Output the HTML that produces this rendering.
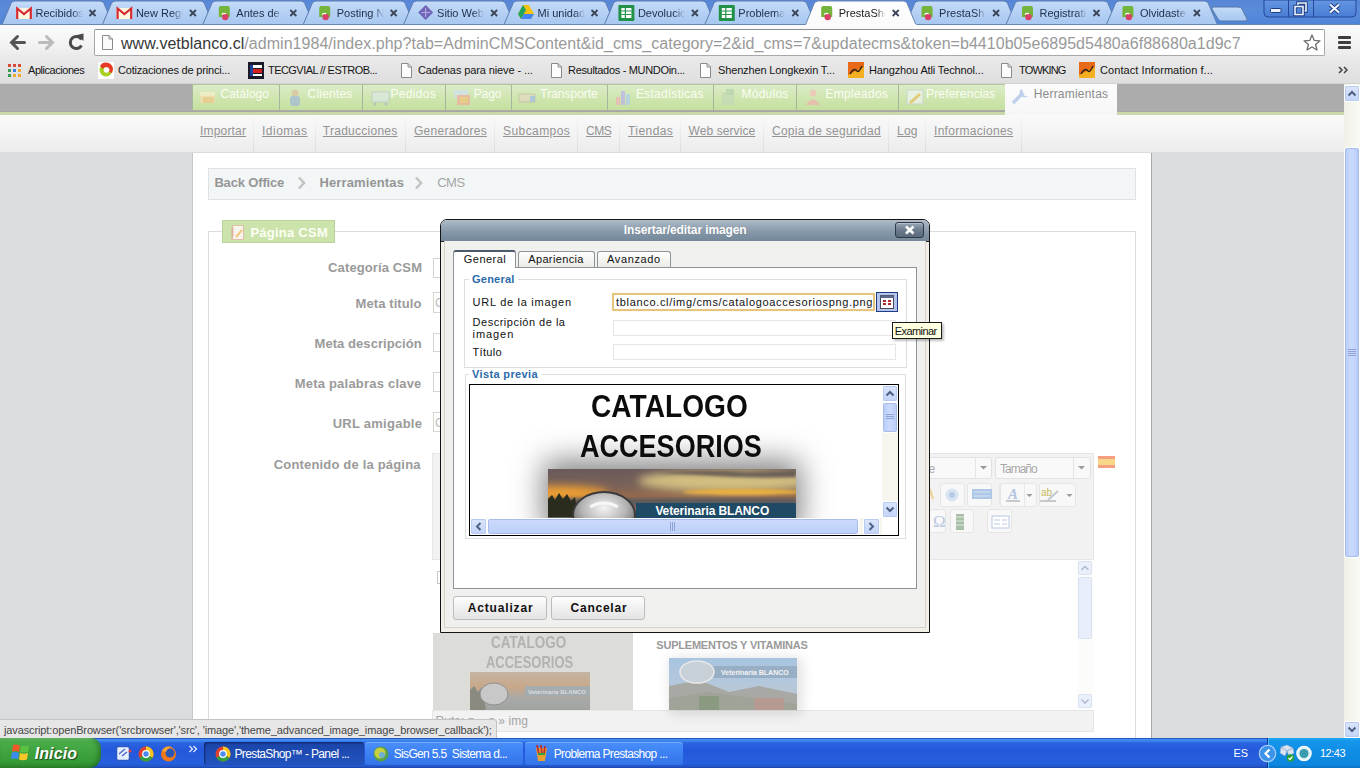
<!DOCTYPE html><html><head><meta charset="utf-8"><style>
*{margin:0;padding:0;box-sizing:border-box}
html,body{width:1360px;height:768px;overflow:hidden;background:#fff;font-family:"Liberation Sans",sans-serif}
.abs{position:absolute}
.t{position:absolute;white-space:nowrap}
</style></head><body><div class="abs" style="left:0;top:0;width:1360px;height:25px;background:linear-gradient(#5786d6,#5a8cda 40%,#4e84d8)"></div><svg class="abs" style="left:0;top:0" width="1360" height="27"><defs><linearGradient id="tg" x1="0" y1="0" x2="0" y2="1"><stop offset="0" stop-color="#c6dcf8"/><stop offset=".5" stop-color="#b4d0f4"/><stop offset="1" stop-color="#a8c8f0"/></linearGradient><linearGradient id="wc" x1="0" y1="0" x2="0" y2="1"><stop offset="0" stop-color="#6496e2"/><stop offset="1" stop-color="#4a7cd4"/></linearGradient><linearGradient id="at" x1="0" y1="0" x2="0" y2="1"><stop offset="0" stop-color="#ffffff"/><stop offset="1" stop-color="#fafafa"/></linearGradient></defs><path d="M2.0 24.5 L11.0 3.5 Q12.0 1 15.0 1 L100.0 1 Q103.0 1 104.0 3.5 L113.0 24.5 Z" fill="url(#tg)" stroke="#5c7cb0" stroke-width="1"/><path d="M102.4 24.5 L111.4 3.5 Q112.4 1 115.4 1 L200.4 1 Q203.4 1 204.4 3.5 L213.4 24.5 Z" fill="url(#tg)" stroke="#5c7cb0" stroke-width="1"/><path d="M202.8 24.5 L211.8 3.5 Q212.8 1 215.8 1 L300.8 1 Q303.8 1 304.8 3.5 L313.8 24.5 Z" fill="url(#tg)" stroke="#5c7cb0" stroke-width="1"/><path d="M303.2 24.5 L312.2 3.5 Q313.2 1 316.2 1 L401.2 1 Q404.2 1 405.2 3.5 L414.2 24.5 Z" fill="url(#tg)" stroke="#5c7cb0" stroke-width="1"/><path d="M403.6 24.5 L412.6 3.5 Q413.6 1 416.6 1 L501.6 1 Q504.6 1 505.6 3.5 L514.6 24.5 Z" fill="url(#tg)" stroke="#5c7cb0" stroke-width="1"/><path d="M504.0 24.5 L513.0 3.5 Q514.0 1 517.0 1 L602.0 1 Q605.0 1 606.0 3.5 L615.0 24.5 Z" fill="url(#tg)" stroke="#5c7cb0" stroke-width="1"/><path d="M604.4 24.5 L613.4 3.5 Q614.4 1 617.4 1 L702.4 1 Q705.4 1 706.4 3.5 L715.4 24.5 Z" fill="url(#tg)" stroke="#5c7cb0" stroke-width="1"/><path d="M704.8 24.5 L713.8 3.5 Q714.8 1 717.8 1 L802.8 1 Q805.8 1 806.8 3.5 L815.8 24.5 Z" fill="url(#tg)" stroke="#5c7cb0" stroke-width="1"/><path d="M905.6 24.5 L914.6 3.5 Q915.6 1 918.6 1 L1003.6 1 Q1006.6 1 1007.6 3.5 L1016.6 24.5 Z" fill="url(#tg)" stroke="#5c7cb0" stroke-width="1"/><path d="M1006.0 24.5 L1015.0 3.5 Q1016.0 1 1019.0 1 L1104.0 1 Q1107.0 1 1108.0 3.5 L1117.0 24.5 Z" fill="url(#tg)" stroke="#5c7cb0" stroke-width="1"/><path d="M1106.4 24.5 L1115.4 3.5 Q1116.4 1 1119.4 1 L1204.4 1 Q1207.4 1 1208.4 3.5 L1217.4 24.5 Z" fill="url(#tg)" stroke="#5c7cb0" stroke-width="1"/><line x1="0" y1="24.5" x2="1360" y2="24.5" stroke="#6a86b4"/><path d="M805.2 25.5 L814.2 3.5 Q815.2 1 818.2 1 L903.2 1 Q906.2 1 907.2 3.5 L916.2 25.5 Z" fill="url(#at)" stroke="#6a86b4" stroke-width="1"/><rect x="806.2" y="24" width="110" height="3" fill="#fbfbfb"/><path d="M1214 7 L1238 7 Q1241 7 1242 9 L1247 19 Q1248 21 1245 21 L1221 21 Q1219 21 1218 19 L1212 9 Q1211 7 1214 7 Z" fill="url(#tg)" stroke="#5a78a8"/><path d="M1264 0 L1264 13 Q1264 17 1268 17 L1352 17 Q1356 17 1356 13 L1356 0 Z" fill="url(#wc)" stroke="#24499a"/><line x1="1288.5" y1="0" x2="1288.5" y2="17" stroke="#24499a"/><line x1="1313.5" y1="0" x2="1313.5" y2="17" stroke="#24499a"/><rect x="1270.5" y="8.5" width="10.5" height="4" rx="1" fill="#eef4ff" stroke="#1c3c80"/><path d="M1298 6 V3 H1306 V11 H1303" fill="none" stroke="#1c3c80" stroke-width="3.4"/><path d="M1298 6 V3 H1306 V11 H1303" fill="none" stroke="#eef4ff" stroke-width="1.6"/><rect x="1295" y="6.5" width="8" height="8" fill="none" stroke="#1c3c80" stroke-width="3.4"/><rect x="1295" y="6.5" width="8" height="8" fill="none" stroke="#eef4ff" stroke-width="1.6"/><path d="M1330 4.5 L1339 12.5 M1339 4.5 L1330 12.5" stroke="#1c3c80" stroke-width="4"/><path d="M1330 4.5 L1339 12.5 M1339 4.5 L1330 12.5" stroke="#eef4ff" stroke-width="2.2"/><path d="M89.5 10 L95.5 16 M95.5 10 L89.5 16" stroke="#3a4658" stroke-width="1.8"/><rect x="16.0" y="8" width="16" height="11" fill="#fff6e0"/><path d="M17.2 19 L17.2 8.5 L24.0 14 L30.8 8.5 L30.8 19" fill="none" stroke="#d62a30" stroke-width="2.2"/><path d="M189.9 10 L195.9 16 M195.9 10 L189.9 16" stroke="#3a4658" stroke-width="1.8"/><rect x="116.4" y="8" width="16" height="11" fill="#fff6e0"/><path d="M117.60000000000001 19 L117.60000000000001 8.5 L124.4 14 L131.20000000000002 8.5 L131.20000000000002 19" fill="none" stroke="#d62a30" stroke-width="2.2"/><path d="M290.3 10 L296.3 16 M296.3 10 L290.3 16" stroke="#3a4658" stroke-width="1.8"/><path d="M218.8 17 L218.8 8 Q218.8 6 220.8 6 L227.8 6 Q229.8 6 229.8 8 L229.8 17 Z" fill="#74b43a"/><circle cx="225.3" cy="17" r="3.2" fill="#d8406a"/><path d="M221.8 14.5 Q223.8 12.5 225.8 14" fill="none" stroke="#fff" stroke-width="1.2"/><path d="M390.7 10 L396.7 16 M396.7 10 L390.7 16" stroke="#3a4658" stroke-width="1.8"/><path d="M319.2 17 L319.2 8 Q319.2 6 321.2 6 L328.2 6 Q330.2 6 330.2 8 L330.2 17 Z" fill="#74b43a"/><circle cx="325.7" cy="17" r="3.2" fill="#d8406a"/><path d="M322.2 14.5 Q324.2 12.5 326.2 14" fill="none" stroke="#fff" stroke-width="1.2"/><path d="M491.1 10 L497.1 16 M497.1 10 L491.1 16" stroke="#3a4658" stroke-width="1.8"/><path d="M425.6 5 L433.1 12.5 L425.6 20 L418.1 12.5 Z" fill="#7064b8"/><path d="M425.6 8 L425.6 17 M421.1 12.5 L430.1 12.5" stroke="#b0a8e0" stroke-width="1.2"/><path d="M591.5 10 L597.5 16 M597.5 10 L591.5 16" stroke="#3a4658" stroke-width="1.8"/><path d="M523.0 5 L529.0 5 L534.0 14 L531.0 19 L521.0 19 L518.0 14 Z" fill="#f4c20d"/><path d="M518.0 14 L523.0 5 L526.0 10 L521.0 19 Z" fill="#1fa463"/><path d="M521.0 19 L524.0 14 L534.0 14 L531.0 19Z" fill="#4285f4"/><path d="M691.9 10 L697.9 16 M697.9 10 L691.9 16" stroke="#3a4658" stroke-width="1.8"/><rect x="618.4" y="5" width="16" height="16" rx="1" fill="#219148"/><rect x="621.4" y="8" width="10" height="10" fill="#fff"/><path d="M621.4 11 L631.4 11 M621.4 14.5 L631.4 14.5 M625.4 8 L625.4 18" stroke="#219148" stroke-width="1.2"/><path d="M792.3 10 L798.3 16 M798.3 10 L792.3 16" stroke="#3a4658" stroke-width="1.8"/><rect x="718.8" y="5" width="16" height="16" rx="1" fill="#219148"/><rect x="721.8" y="8" width="10" height="10" fill="#fff"/><path d="M721.8 11 L731.8 11 M721.8 14.5 L731.8 14.5 M725.8 8 L725.8 18" stroke="#219148" stroke-width="1.2"/><path d="M892.7 10 L898.7 16 M898.7 10 L892.7 16" stroke="#3a4658" stroke-width="1.8"/><path d="M821.2 17 L821.2 8 Q821.2 6 823.2 6 L830.2 6 Q832.2 6 832.2 8 L832.2 17 Z" fill="#74b43a"/><circle cx="827.7" cy="17" r="3.2" fill="#d8406a"/><path d="M824.2 14.5 Q826.2 12.5 828.2 14" fill="none" stroke="#fff" stroke-width="1.2"/><path d="M993.1 10 L999.1 16 M999.1 10 L993.1 16" stroke="#3a4658" stroke-width="1.8"/><path d="M921.6 17 L921.6 8 Q921.6 6 923.6 6 L930.6 6 Q932.6 6 932.6 8 L932.6 17 Z" fill="#74b43a"/><circle cx="928.1" cy="17" r="3.2" fill="#d8406a"/><path d="M924.6 14.5 Q926.6 12.5 928.6 14" fill="none" stroke="#fff" stroke-width="1.2"/><path d="M1093.5 10 L1099.5 16 M1099.5 10 L1093.5 16" stroke="#3a4658" stroke-width="1.8"/><path d="M1022.0 17 L1022.0 8 Q1022.0 6 1024.0 6 L1031.0 6 Q1033.0 6 1033.0 8 L1033.0 17 Z" fill="#74b43a"/><circle cx="1028.5" cy="17" r="3.2" fill="#d8406a"/><path d="M1025.0 14.5 Q1027.0 12.5 1029.0 14" fill="none" stroke="#fff" stroke-width="1.2"/><path d="M1193.9 10 L1199.9 16 M1199.9 10 L1193.9 16" stroke="#3a4658" stroke-width="1.8"/><path d="M1122.4 17 L1122.4 8 Q1122.4 6 1124.4 6 L1131.4 6 Q1133.4 6 1133.4 8 L1133.4 17 Z" fill="#74b43a"/><circle cx="1128.9" cy="17" r="3.2" fill="#d8406a"/><path d="M1125.4 14.5 Q1127.4 12.5 1129.4 14" fill="none" stroke="#fff" stroke-width="1.2"/></svg><div class="t" style="left:35.50px;top:8px;font-size:11px;line-height:11px;color:#1e2e48;width:47px;overflow:hidden;-webkit-mask-image:linear-gradient(90deg,#000 78%,transparent);">Recibidos</div><div class="t" style="left:135.90px;top:8px;font-size:11px;line-height:11px;color:#1e2e48;width:47px;overflow:hidden;-webkit-mask-image:linear-gradient(90deg,#000 78%,transparent);">New Regi</div><div class="t" style="left:236.30px;top:8px;font-size:11px;line-height:11px;color:#1e2e48;width:47px;overflow:hidden;-webkit-mask-image:linear-gradient(90deg,#000 78%,transparent);">Antes de</div><div class="t" style="left:336.70px;top:8px;font-size:11px;line-height:11px;color:#1e2e48;width:47px;overflow:hidden;-webkit-mask-image:linear-gradient(90deg,#000 78%,transparent);">Posting N</div><div class="t" style="left:437.10px;top:8px;font-size:11px;line-height:11px;color:#1e2e48;width:47px;overflow:hidden;-webkit-mask-image:linear-gradient(90deg,#000 78%,transparent);">Sitio Web</div><div class="t" style="left:537.50px;top:8px;font-size:11px;line-height:11px;color:#1e2e48;width:47px;overflow:hidden;-webkit-mask-image:linear-gradient(90deg,#000 78%,transparent);">Mi unidad</div><div class="t" style="left:637.90px;top:8px;font-size:11px;line-height:11px;color:#1e2e48;width:47px;overflow:hidden;-webkit-mask-image:linear-gradient(90deg,#000 78%,transparent);">Devolucio</div><div class="t" style="left:738.30px;top:8px;font-size:11px;line-height:11px;color:#1e2e48;width:47px;overflow:hidden;-webkit-mask-image:linear-gradient(90deg,#000 78%,transparent);">Problemas</div><div class="t" style="left:838.70px;top:8px;font-size:11px;line-height:11px;color:#1a1a1a;width:47px;overflow:hidden;-webkit-mask-image:linear-gradient(90deg,#000 78%,transparent);">PrestaSho</div><div class="t" style="left:939.10px;top:8px;font-size:11px;line-height:11px;color:#1e2e48;width:47px;overflow:hidden;-webkit-mask-image:linear-gradient(90deg,#000 78%,transparent);">PrestaSh</div><div class="t" style="left:1039.50px;top:8px;font-size:11px;line-height:11px;color:#1e2e48;width:47px;overflow:hidden;-webkit-mask-image:linear-gradient(90deg,#000 78%,transparent);">Registrati</div><div class="t" style="left:1139.90px;top:8px;font-size:11px;line-height:11px;color:#1e2e48;width:47px;overflow:hidden;-webkit-mask-image:linear-gradient(90deg,#000 78%,transparent);">Olvidaste</div><div class="abs" style="left:0;top:25px;width:1360px;height:59px;background:linear-gradient(#fbfbfb,#f2f2f2 35%,#e8e8e8 60%,#dedede)"></div><div class="abs" style="left:0;top:83px;width:1360px;height:1px;background:#d2d2d2"></div><svg class="abs" style="left:0;top:25px" width="95" height="32">
<path d="M11.5 17.5 L24.5 17.5 M17.5 11.5 L11.5 17.5 L17.5 23.5" fill="none" stroke="#555" stroke-width="3" stroke-linecap="round"/>
<path d="M39.5 17.5 L52.5 17.5 M46.5 11.5 L52.5 17.5 L46.5 23.5" fill="none" stroke="#bbb" stroke-width="3" stroke-linecap="round"/>
<path d="M81.5 14.5 A6 6 0 1 0 81.5 20.5" fill="none" stroke="#4a4a4a" stroke-width="3"/><path d="M77 10 L83.5 8.5 L83.5 16 Z" fill="#4a4a4a"/>
</svg><div class="abs" style="left:94px;top:29px;width:1231px;height:27px;background:#fff;border:1px solid #a8a8a8;border-top-color:#909090;border-radius:2px"></div><svg class="abs" style="left:100px;top:34px" width="16" height="18"><path d="M2.5 1.5 L9 1.5 L12.5 5 L12.5 15.5 L2.5 15.5 Z" fill="#fafafa" stroke="#8a8a8a"/><path d="M9 1.5 L9 5 L12.5 5" fill="none" stroke="#8a8a8a"/></svg><div class="t" style="left:121.00px;top:36px;font-size:16px;line-height:16px;color:#999;letter-spacing:0.038px;-webkit-font-smoothing:antialiased;"><span style="color:#383838">www.vetblanco.cl</span>/admin1984/index.php?tab=AdminCMSContent&amp;id_cms_category=2&amp;id_cms=7&amp;updatecms&amp;token=b4410b05e6895d5480a6f88680a1d9c7</div><svg class="abs" style="left:1302px;top:33px" width="20" height="20"><path d="M10 2 L12.3 7.4 L18 7.8 L13.6 11.5 L15 17 L10 14 L5 17 L6.4 11.5 L2 7.8 L7.7 7.4 Z" fill="none" stroke="#6e6e6e" stroke-width="1.3" stroke-linejoin="round"/></svg><div class="abs" style="left:1338px;top:36px;width:13px;height:3px;background:#3e3e3e;border-radius:1px"></div><div class="abs" style="left:1338px;top:41px;width:13px;height:3px;background:#3e3e3e;border-radius:1px"></div><div class="abs" style="left:1338px;top:46px;width:13px;height:3px;background:#3e3e3e;border-radius:1px"></div><div class="t" style="left:28.00px;top:65px;font-size:11px;line-height:11px;color:#151515;letter-spacing:-0.455px;">Aplicaciones</div><div class="t" style="left:118.00px;top:65px;font-size:11px;line-height:11px;color:#151515;letter-spacing:-0.188px;">Cotizaciones de princi...</div><div class="t" style="left:268.00px;top:65px;font-size:11px;line-height:11px;color:#151515;letter-spacing:-0.550px;">TECGVIAL // ESTROB...</div><div class="t" style="left:418.00px;top:65px;font-size:11px;line-height:11px;color:#151515;letter-spacing:-0.109px;">Cadenas para nieve - ...</div><div class="t" style="left:568.00px;top:65px;font-size:11px;line-height:11px;color:#151515;letter-spacing:-0.314px;">Resultados - MUNDOin...</div><div class="t" style="left:718.00px;top:65px;font-size:11px;line-height:11px;color:#151515;letter-spacing:-0.145px;">Shenzhen Longkexin T...</div><div class="t" style="left:869.00px;top:65px;font-size:11px;line-height:11px;color:#151515;letter-spacing:-0.135px;">Hangzhou Atli Technol...</div><div class="t" style="left:1019.00px;top:65px;font-size:11px;line-height:11px;color:#151515;letter-spacing:-0.833px;">TOWKING</div><div class="t" style="left:1100.00px;top:65px;font-size:11px;line-height:11px;color:#151515;letter-spacing:0.070px;">Contact Information f...</div><svg class="abs" style="left:0;top:57px" width="1360" height="27"><rect x="8" y="7" width="3" height="3" fill="#d84a38"/><rect x="13" y="7" width="3" height="3" fill="#d84a38"/><rect x="18" y="7" width="3" height="3" fill="#d84a38"/><rect x="8" y="12" width="3" height="3" fill="#3a9a58"/><rect x="13" y="12" width="3" height="3" fill="#3a80e0"/><rect x="18" y="12" width="3" height="3" fill="#f0a830"/><rect x="8" y="17" width="3" height="3" fill="#3a9a58"/><rect x="13" y="17" width="3" height="3" fill="#f0a830"/><rect x="18" y="17" width="3" height="3" fill="#f0a830"/><rect x="98" y="5" width="16" height="17" fill="#fff"/><circle cx="106" cy="13" r="6.5" fill="#a8d020"/><path d="M100 9 A7 7 0 0 1 113 12 L112 16 L109 15 A3 3 0 0 0 103 12 Z" fill="#e83828"/><circle cx="106.5" cy="13" r="2.8" fill="#fff"/><rect x="248" y="5" width="16" height="17" fill="#1a1a2a"/><rect x="250" y="8" width="12" height="3" fill="#fff"/><rect x="250" y="12" width="12" height="4" fill="#d42020"/><rect x="250" y="17" width="12" height="2" fill="#fff"/><rect x="250" y="8" width="3" height="11" fill="#2040a0"/><path d="M401.5 6.5 L408 6.5 L411.5 10 L411.5 20.5 L401.5 20.5 Z" fill="#fdfdfd" stroke="#8a8a8a"/><path d="M408 6.5 L408 10 L411.5 10" fill="none" stroke="#8a8a8a"/><path d="M551.5 6.5 L558 6.5 L561.5 10 L561.5 20.5 L551.5 20.5 Z" fill="#fdfdfd" stroke="#8a8a8a"/><path d="M558 6.5 L558 10 L561.5 10" fill="none" stroke="#8a8a8a"/><path d="M700.5 6.5 L707 6.5 L710.5 10 L710.5 20.5 L700.5 20.5 Z" fill="#fdfdfd" stroke="#8a8a8a"/><path d="M707 6.5 L707 10 L710.5 10" fill="none" stroke="#8a8a8a"/><path d="M1001.5 6.5 L1008 6.5 L1011.5 10 L1011.5 20.5 L1001.5 20.5 Z" fill="#fdfdfd" stroke="#8a8a8a"/><path d="M1008 6.5 L1008 10 L1011.5 10" fill="none" stroke="#8a8a8a"/><rect x="848" y="5" width="16" height="16" fill="#f4b020"/><path d="M848 5 L864 5 L864 10 L848 18 Z" fill="#e86a18"/><path d="M850 17 Q854 10 857 14 Q859 16 862 9" fill="none" stroke="#302010" stroke-width="1.4"/><rect x="1079" y="5" width="16" height="16" fill="#f4b020"/><path d="M1079 5 L1095 5 L1095 10 L1079 18 Z" fill="#e86a18"/><path d="M1081 17 Q1085 10 1088 14 Q1090 16 1093 9" fill="none" stroke="#302010" stroke-width="1.4"/><path d="M1339 10 L1342 13 L1339 16 M1344 10 L1347 13 L1344 16" fill="none" stroke="#444" stroke-width="1.5"/></svg><div class="abs" style="left:0;top:84px;width:1344px;height:654px;background:#dadde0"></div><div class="abs" style="left:0;top:84px;width:1344px;height:28px;background:#acacac"></div><div class="abs" style="left:0;top:111px;width:1344px;height:1px;background:#a4a8a0"></div><div class="abs" style="left:0;top:112px;width:1344px;height:3px;background:#c8d8a8"></div><div class="abs" style="left:0;top:115px;width:1344px;height:38px;background:linear-gradient(#f9f9f9,#f2f2f2 60%,#ececec);border-bottom:1px solid #dcdcdc"></div><div class="abs" style="left:192px;top:153px;width:960px;height:585px;background:#fff;border-left:1px solid #c6c8cc;border-right:1px solid #a8aaae"></div><div class="abs" style="left:192px;top:84px;width:87px;height:26px;background:linear-gradient(#dcecc8,#cfe6b0 50%,#c6e0a0);border-top:1px solid #b4c4a0;border-left:1px solid #a8b49c"></div><div class="t" style="left:220.60px;top:88px;font-size:12px;line-height:12px;color:#fbfdf4;letter-spacing:0.057px;">Catálogo</div><div class="abs" style="left:279px;top:84px;width:83px;height:26px;background:linear-gradient(#dcecc8,#cfe6b0 50%,#c6e0a0);border-top:1px solid #b4c4a0;border-left:1px solid #a8b49c"></div><div class="t" style="left:307.60px;top:88px;font-size:12px;line-height:12px;color:#fbfdf4;letter-spacing:0.200px;">Clientes</div><div class="abs" style="left:362px;top:84px;width:83px;height:26px;background:linear-gradient(#dcecc8,#cfe6b0 50%,#c6e0a0);border-top:1px solid #b4c4a0;border-left:1px solid #a8b49c"></div><div class="t" style="left:390.40px;top:88px;font-size:12px;line-height:12px;color:#fbfdf4;letter-spacing:0.317px;">Pedidos</div><div class="abs" style="left:445px;top:84px;width:66px;height:26px;background:linear-gradient(#dcecc8,#cfe6b0 50%,#c6e0a0);border-top:1px solid #b4c4a0;border-left:1px solid #a8b49c"></div><div class="t" style="left:473.70px;top:88px;font-size:12px;line-height:12px;color:#fbfdf4;letter-spacing:-0.067px;">Pago</div><div class="abs" style="left:511px;top:84px;width:96px;height:26px;background:linear-gradient(#dcecc8,#cfe6b0 50%,#c6e0a0);border-top:1px solid #b4c4a0;border-left:1px solid #a8b49c"></div><div class="t" style="left:540.30px;top:88px;font-size:12px;line-height:12px;color:#fbfdf4;letter-spacing:-0.011px;">Transporte</div><div class="abs" style="left:607px;top:84px;width:106px;height:26px;background:linear-gradient(#dcecc8,#cfe6b0 50%,#c6e0a0);border-top:1px solid #b4c4a0;border-left:1px solid #a8b49c"></div><div class="t" style="left:636.00px;top:88px;font-size:12px;line-height:12px;color:#fbfdf4;letter-spacing:0.245px;">Estadísticas</div><div class="abs" style="left:713px;top:84px;width:83px;height:26px;background:linear-gradient(#dcecc8,#cfe6b0 50%,#c6e0a0);border-top:1px solid #b4c4a0;border-left:1px solid #a8b49c"></div><div class="t" style="left:741.50px;top:88px;font-size:12px;line-height:12px;color:#fbfdf4;letter-spacing:0.250px;">Módulos</div><div class="abs" style="left:796px;top:84px;width:102px;height:26px;background:linear-gradient(#dcecc8,#cfe6b0 50%,#c6e0a0);border-top:1px solid #b4c4a0;border-left:1px solid #a8b49c"></div><div class="t" style="left:825.50px;top:88px;font-size:12px;line-height:12px;color:#fbfdf4;letter-spacing:0.312px;">Empleados</div><div class="abs" style="left:898px;top:84px;width:107px;height:26px;background:linear-gradient(#dcecc8,#cfe6b0 50%,#c6e0a0);border-top:1px solid #b4c4a0;border-left:1px solid #a8b49c"></div><div class="t" style="left:926.00px;top:88px;font-size:12px;line-height:12px;color:#fbfdf4;letter-spacing:0.182px;">Preferencias</div><svg class="abs" style="left:192px;top:84px;opacity:.6" width="820" height="27">
<rect x="8" y="8" width="15" height="11" fill="#fbe0b0"/><rect x="8" y="8" width="15" height="4" fill="#fff0d0"/><rect x="11" y="13" width="11" height="6" fill="#f8c080"/>
<circle cx="103" cy="9" r="3.5" fill="#e0b898"/><rect x="98" y="12" width="10" height="10" rx="3" fill="#98b0e0"/>
<rect x="180" y="8" width="17" height="10" fill="#e0e8f0" stroke="#b8c4d0"/><circle cx="183" cy="20" r="1.5" fill="#a8b0b8"/><circle cx="194" cy="20" r="1.5" fill="#a8b0b8"/>
<rect x="262" y="6" width="14" height="8" fill="#d0e0f8"/><rect x="265" y="11" width="13" height="10" fill="#f8a098"/><rect x="268" y="13" width="8" height="6" fill="#f8c070"/>
<rect x="327" y="10" width="16" height="8" fill="#e8d8c4" stroke="#c0b4a4"/><rect x="338" y="12" width="5" height="6" fill="#98b4f0"/>
<rect x="424" y="13" width="4" height="8" fill="#f8a8b8"/><rect x="429" y="7" width="4" height="14" fill="#b8a8f8"/><rect x="434" y="10" width="4" height="11" fill="#a8c8f8"/>
<rect x="530" y="8" width="12" height="13" fill="#c0d8b8"/><rect x="534" y="5" width="8" height="6" fill="#b0ccaa"/>
<circle cx="621" cy="9" r="3.5" fill="#f8b8b8"/><path d="M614 21 Q621 10 628 21 Z" fill="#f8a8b0"/>
<rect x="715" y="6" width="16" height="14" fill="#f4f8fc" stroke="#c0ccd8"/><path d="M718 19 L728 10" stroke="#f0b850" stroke-width="3"/>
</svg><div class="abs" style="left:1005px;top:84px;width:112px;height:31px;background:linear-gradient(#fcfcfc,#f6f6f6)"></div><div class="t" style="left:1033.70px;top:88px;font-size:12px;line-height:12px;color:#8c8c8c;letter-spacing:0.209px;">Herramientas</div><svg class="abs" style="left:1010px;top:85px" width="22" height="22"><path d="M4 17 L12 9" stroke="#c0d0ec" stroke-width="3.5" stroke-linecap="round"/><path d="M11 4 A4.5 4.5 0 1 0 18 11 L15 11 L13 9 L13 6 Z" fill="#c0d0ec"/></svg><div class="t" style="left:200.00px;top:125px;font-size:12px;line-height:12px;color:#939393;letter-spacing:0.186px;text-decoration:underline;text-underline-offset:1px;">Importar</div><div class="t" style="left:262.00px;top:125px;font-size:12px;line-height:12px;color:#939393;letter-spacing:0.500px;text-decoration:underline;text-underline-offset:1px;">Idiomas</div><div class="t" style="left:322.80px;top:125px;font-size:12px;line-height:12px;color:#939393;letter-spacing:0.264px;text-decoration:underline;text-underline-offset:1px;">Traducciones</div><div class="t" style="left:414.00px;top:125px;font-size:12px;line-height:12px;color:#939393;letter-spacing:0.260px;text-decoration:underline;text-underline-offset:1px;">Generadores</div><div class="t" style="left:503.00px;top:125px;font-size:12px;line-height:12px;color:#939393;letter-spacing:0.425px;text-decoration:underline;text-underline-offset:1px;">Subcampos</div><div class="t" style="left:586.00px;top:125px;font-size:12px;line-height:12px;color:#939393;letter-spacing:-0.500px;text-decoration:underline;text-underline-offset:1px;">CMS</div><div class="t" style="left:628.00px;top:125px;font-size:12px;line-height:12px;color:#939393;letter-spacing:0.433px;text-decoration:underline;text-underline-offset:1px;">Tiendas</div><div class="t" style="left:688.50px;top:125px;font-size:12px;line-height:12px;color:#939393;letter-spacing:0.090px;text-decoration:underline;text-underline-offset:1px;">Web service</div><div class="t" style="left:772.00px;top:125px;font-size:12px;line-height:12px;color:#939393;letter-spacing:0.265px;text-decoration:underline;text-underline-offset:1px;">Copia de seguridad</div><div class="t" style="left:897.00px;top:125px;font-size:12px;line-height:12px;color:#939393;letter-spacing:0.250px;text-decoration:underline;text-underline-offset:1px;">Log</div><div class="t" style="left:934.00px;top:125px;font-size:12px;line-height:12px;color:#939393;letter-spacing:0.292px;text-decoration:underline;text-underline-offset:1px;">Informaciones</div><div class="abs" style="left:253px;top:118px;width:1px;height:35px;background:linear-gradient(#f4f4f4,#dcdcdc)"></div><div class="abs" style="left:315px;top:118px;width:1px;height:35px;background:linear-gradient(#f4f4f4,#dcdcdc)"></div><div class="abs" style="left:405px;top:118px;width:1px;height:35px;background:linear-gradient(#f4f4f4,#dcdcdc)"></div><div class="abs" style="left:494px;top:118px;width:1px;height:35px;background:linear-gradient(#f4f4f4,#dcdcdc)"></div><div class="abs" style="left:577px;top:118px;width:1px;height:35px;background:linear-gradient(#f4f4f4,#dcdcdc)"></div><div class="abs" style="left:619px;top:118px;width:1px;height:35px;background:linear-gradient(#f4f4f4,#dcdcdc)"></div><div class="abs" style="left:680px;top:118px;width:1px;height:35px;background:linear-gradient(#f4f4f4,#dcdcdc)"></div><div class="abs" style="left:763px;top:118px;width:1px;height:35px;background:linear-gradient(#f4f4f4,#dcdcdc)"></div><div class="abs" style="left:888px;top:118px;width:1px;height:35px;background:linear-gradient(#f4f4f4,#dcdcdc)"></div><div class="abs" style="left:925px;top:118px;width:1px;height:35px;background:linear-gradient(#f4f4f4,#dcdcdc)"></div><div class="abs" style="left:1021px;top:118px;width:1px;height:35px;background:linear-gradient(#f4f4f4,#dcdcdc)"></div><div class="abs" style="left:208px;top:168px;width:928px;height:32px;background:#f3f6f6;border:1px solid #dee2e2"></div><div class="t" style="left:214.40px;top:176px;font-size:13px;line-height:13px;color:#969696;font-weight:bold;letter-spacing:-0.160px;">Back Office</div><div class="t" style="left:319.40px;top:176px;font-size:13px;line-height:13px;color:#969696;font-weight:bold;letter-spacing:0.127px;">Herramientas</div><div class="t" style="left:437.20px;top:176px;font-size:13px;line-height:13px;color:#a6a6a6;letter-spacing:-0.500px;">CMS</div><svg class="abs" style="left:297px;top:175px" width="10" height="16"><path d="M2 2.5 L7 8 L2 13.5" fill="none" stroke="#c4c4c4" stroke-width="2.6"/></svg><svg class="abs" style="left:414px;top:175px" width="10" height="16"><path d="M2 2.5 L7 8 L2 13.5" fill="none" stroke="#c4c4c4" stroke-width="2.6"/></svg><div class="abs" style="left:208px;top:231px;width:928px;height:520px;border:1px solid #dcdcdc"></div><div class="abs" style="left:222px;top:220px;width:113px;height:23px;background:#cce4ac;border:1px solid #b8d49a"></div><div class="t" style="left:250.40px;top:226px;font-size:13px;line-height:13px;color:#fcfff4;font-weight:bold;letter-spacing:0.244px;">Página CSM</div><svg class="abs" style="left:230px;top:224px" width="16" height="17"><rect x="2.5" y="1.5" width="11" height="14" fill="#f8f4ec" stroke="#e0c0a8"/><path d="M2 3 V15 M2 5 H4 M2 8 H4 M2 11 H4" stroke="#d8a898"/><path d="M6 13 L12 6" stroke="#f0c880" stroke-width="2"/></svg><div class="t" style="left:328.10px;top:261px;font-size:13px;line-height:13px;color:#9a9a9a;font-weight:bold;letter-spacing:0.117px;">Categoría CSM</div><div class="t" style="left:355.50px;top:297px;font-size:13px;line-height:13px;color:#9a9a9a;font-weight:bold;letter-spacing:0.100px;">Meta titulo</div><div class="t" style="left:314.50px;top:337px;font-size:13px;line-height:13px;color:#9a9a9a;font-weight:bold;letter-spacing:0.067px;">Meta descripción</div><div class="t" style="left:294.70px;top:377px;font-size:13px;line-height:13px;color:#9a9a9a;font-weight:bold;letter-spacing:0.211px;">Meta palabras clave</div><div class="t" style="left:332.70px;top:417px;font-size:13px;line-height:13px;color:#9a9a9a;font-weight:bold;letter-spacing:0.255px;">URL amigable</div><div class="t" style="left:273.70px;top:458px;font-size:13px;line-height:13px;color:#9a9a9a;font-weight:bold;letter-spacing:0.181px;">Contenido de la página</div><div class="abs" style="left:433px;top:258px;width:40px;height:20px;border:1px solid #d6d6d0;background:#fff"></div><div class="abs" style="left:433px;top:292px;width:40px;height:21px;border:1px solid #d6d6d0;background:#fff"></div><div class="abs" style="left:433px;top:333px;width:40px;height:19px;border:1px solid #d6d6d0;background:#fff"></div><div class="abs" style="left:433px;top:372px;width:40px;height:20px;border:1px solid #d6d6d0;background:#fff"></div><div class="abs" style="left:433px;top:412px;width:40px;height:20px;border:1px solid #d6d6d0;background:#fff"></div><div class="t" style="left:435px;top:297px;font-size:12px;line-height:12px;color:#bbb">C</div><div class="t" style="left:435px;top:417px;font-size:12px;line-height:12px;color:#bbb">C</div><div class="abs" style="left:432px;top:453px;width:662px;height:279px;background:#f2f2f2;border:1px solid #e6e6e6"></div><div class="abs" style="left:432px;top:559px;width:662px;height:152px;background:#fff;border-top:1px solid #e6e6e6;border-bottom:1px solid #e6e6e6"></div><div class="abs" style="left:928px;top:457px;width:64px;height:22px;background:#f9f9f9;border:1px solid #e2e2e2;border-radius:3px"></div><div class="abs" style="left:975px;top:458px;width:1px;height:20px;background:#e4e4e4"></div><div class="abs" style="left:995px;top:457px;width:96px;height:22px;background:#f9f9f9;border:1px solid #e2e2e2;border-radius:3px"></div><div class="abs" style="left:1073px;top:458px;width:1px;height:20px;background:#e4e4e4"></div><div class="t" style="left:928.50px;top:463px;font-size:12px;line-height:12px;color:#aaa;">e</div><div class="t" style="left:1000.00px;top:463px;font-size:12px;line-height:12px;color:#a8a8a8;letter-spacing:-1.000px;">Tamaño</div><svg class="abs" style="left:975px;top:464px" width="120" height="8"><path d="M5 2 L12 2 L8.5 5.5 Z" fill="#9a9a9a"/><path d="M103 2 L110 2 L106.5 5.5 Z" fill="#9a9a9a"/></svg><div class="abs" style="left:1098px;top:456px;width:17px;height:12px;background:linear-gradient(#f4a080 25%,#f8d888 25%,#f8d888 75%,#f4a080 75%)"></div><div class="abs" style="left:940px;top:483px;width:25px;height:24px;background:#f8f8f8;border:1px solid #e6e6e6;border-radius:3px"></div><div class="abs" style="left:967px;top:483px;width:25px;height:24px;background:#f8f8f8;border:1px solid #e6e6e6;border-radius:3px"></div><div class="abs" style="left:999px;top:483px;width:37px;height:24px;background:#f8f8f8;border:1px solid #e6e6e6;border-radius:3px"></div><div class="abs" style="left:1000px;top:483px;width:37px;height:24px;background:#f8f8f8;border:1px solid #e6e6e6;border-radius:3px"></div><div class="abs" style="left:1024px;top:484px;width:1px;height:22px;background:#e8e8e8"></div><div class="abs" style="left:1063px;top:484px;width:1px;height:22px;background:#e8e8e8"></div><div class="abs" style="left:1039px;top:483px;width:37px;height:24px;background:#f8f8f8;border:1px solid #e6e6e6;border-radius:3px"></div><div class="abs" style="left:929px;top:509px;width:17px;height:24px;background:#f8f8f8;border:1px solid #e6e6e6;border-radius:3px"></div><div class="abs" style="left:950px;top:509px;width:24px;height:24px;background:#f8f8f8;border:1px solid #e6e6e6;border-radius:3px"></div><div class="abs" style="left:987px;top:509px;width:25px;height:24px;background:#f8f8f8;border:1px solid #e6e6e6;border-radius:3px"></div><svg class="abs" style="left:928px;top:483px" width="160" height="52">
<path d="M2 6 L5 16" stroke="#f0d090" stroke-width="2"/>
<circle cx="24" cy="12" r="6.5" fill="#d8e4f4"/><circle cx="24" cy="12" r="3" fill="#b8cce8"/>
<rect x="44" y="6" width="20" height="10" fill="#b0c8e8"/><path d="M46 9 H62 M46 13 H62" stroke="#d8e4f4"/>
<text x="80" y="16" font-size="15" fill="#b4c4e0" font-style="italic" font-weight="bold" font-family="Liberation Serif">A</text><rect x="78" y="17" width="14" height="2" fill="#c8c8c8"/>
<path d="M98.5 11 L104.5 11 L101.5 14 Z" fill="#999"/>
<text x="113" y="13" font-size="10" fill="#c8b860" font-family="Liberation Sans">ab</text><path d="M120 17 L130 8" stroke="#c0c8d0" stroke-width="2"/><rect x="112" y="17" width="16" height="2" fill="#c8c8c8"/>
<path d="M138.5 11 L144.5 11 L141.5 14 Z" fill="#999"/>
<text x="5" y="44" font-size="17" fill="#b8c8e0" font-family="Liberation Serif">Ω</text>
<rect x="28" y="31" width="8" height="16" fill="#a8c0a8"/><path d="M28 34 H36 M28 38 H36 M28 42 H36" stroke="#e0e8e0"/>
<rect x="64" y="33" width="17" height="12" fill="#fff" stroke="#b8c8e0"/><path d="M66 37 H72 M66 41 H72 M74 37 H79 M74 41 H79" stroke="#b8c8e0"/>
</svg><div class="abs" style="left:437px;top:571px;width:4px;height:13px;border:1px solid #c8c8c8;border-right:none;background:#fff"></div><div class="abs" style="left:433px;top:633px;width:200px;height:77px;background:#dcdcd9"></div><div class="t" style="left:491.00px;top:635px;font-size:16px;line-height:16px;color:#b4b2ae;font-weight:bold;transform:scaleX(0.843);transform-origin:0 0;">CATALOGO</div><div class="t" style="left:485.50px;top:655px;font-size:16px;line-height:16px;color:#b4b2ae;font-weight:bold;transform:scaleX(0.81);transform-origin:0 0;">ACCESORIOS</div><svg class="abs" style="left:470px;top:672px" width="120" height="38">
<defs><linearGradient id="s1" x1="0" y1="0" x2="0" y2="1"><stop offset="0" stop-color="#c4b4a4"/><stop offset=".4" stop-color="#c8a888"/><stop offset=".7" stop-color="#a8a8a8"/><stop offset="1" stop-color="#a0a4a0"/></linearGradient></defs>
<rect width="120" height="38" fill="url(#s1)"/>
<rect x="55" y="14" width="65" height="10" fill="#a4acb0"/>
<path d="M0 38 L0 18 L4 14 L8 20 L12 15 L16 38 Z" fill="#8a8a80"/>
<ellipse cx="24" cy="22" rx="14" ry="11" fill="#c8c8c8" stroke="#909090"/>
<text x="58" y="21.5" font-size="6" font-weight="bold" fill="#dcdcdc" font-family="Liberation Sans">Veterinaria BLANCO</text>
</svg><div class="t" style="left:656.30px;top:640px;font-size:11px;line-height:11px;color:#9a9a9a;font-weight:bold;letter-spacing:-0.214px;">SUPLEMENTOS Y VITAMINAS</div><div class="abs" style="left:669px;top:658px;width:128px;height:52px;box-shadow:3px 2px 12px 2px rgba(0,0,0,.12)"></div><svg class="abs" style="left:669px;top:658px" width="128" height="52">
<defs><linearGradient id="s2" x1="0" y1="0" x2="0" y2="1"><stop offset="0" stop-color="#a8c4e0"/><stop offset=".5" stop-color="#b4c8dc"/><stop offset="1" stop-color="#c0c4c0"/></linearGradient></defs>
<rect width="128" height="52" fill="url(#s2)"/>
<path d="M0 28 L30 22 L60 34 L90 28 L128 36 L128 52 L0 52 Z" fill="#a8a8a4"/>
<path d="M0 40 L40 34 L128 46 L128 52 L0 52 Z" fill="#a0a498"/>
<rect x="85" y="40" width="30" height="12" fill="#b49a90"/><rect x="30" y="38" width="20" height="14" fill="#8a9a80"/>
<rect x="43" y="8" width="85" height="12" fill="#98aec4"/>
<ellipse cx="28" cy="14" rx="17" ry="11" fill="#c8d0d8" stroke="#e8e8e8" stroke-width="1.5"/>
<text x="52" y="17" font-size="7" font-weight="bold" fill="#f4f4f4" font-family="Liberation Sans">Veterinaria BLANCO</text>
</svg><div class="t" style="left:435.50px;top:715px;font-size:12px;line-height:12px;color:#a4a4a4;letter-spacing:0.062px;">Ruta: p » a » img</div><div class="abs" style="left:1077px;top:560px;width:16px;height:150px;background:#fcfcfa"></div><div class="abs" style="left:1078px;top:561px;width:14px;height:14px;background:#eaf0fc;border:1px solid #dae2f2;border-radius:2px"></div><svg class="abs" style="left:1077px;top:560px" width="16" height="16"><path d="M4.5 10 L8 6.5 L11.5 10" fill="none" stroke="#b0bcd0" stroke-width="1.6"/></svg><div class="abs" style="left:1078px;top:577px;width:14px;height:62px;background:#e8eefc;border:1px solid #dae2f2;border-radius:2px"></div><div class="abs" style="left:1078px;top:694px;width:14px;height:14px;background:#eaf0fc;border:1px solid #dae2f2;border-radius:2px"></div><svg class="abs" style="left:1077px;top:693px" width="16" height="16"><path d="M4.5 6.5 L8 10 L11.5 6.5" fill="none" stroke="#b0bcd0" stroke-width="1.6"/></svg><div class="abs" style="left:1344px;top:84px;width:16px;height:654px;background:linear-gradient(90deg,#f0efe8,#fbfbf6)"></div><div class="abs" style="left:1344px;top:85px;width:16px;height:17px;background:linear-gradient(#dce6fc,#c2d4f8);border:1px solid #fff;box-shadow:inset 0 0 0 1px #b8ccf0;border-radius:2px"></div><svg class="abs" style="left:0;top:0;overflow:visible" width="1" height="1"><path d="M1348.5 95.5 L1352.0 92.0 L1355.5 95.5" fill="none" stroke="#4d6185" stroke-width="2"/></svg><div class="abs" style="left:1344px;top:147px;width:16px;height:411px;background:linear-gradient(90deg,#b6caf8,#cadafc 40%,#c4d4fc 70%,#b0c4f4);border:1px solid #fff;box-shadow:inset 0 0 0 1px #a8bcec;border-radius:3px"></div><svg class="abs" style="left:1347px;top:348px" width="10" height="8"><path d="M1 1.5 H9 M1 3.5 H9 M1 5.5 H9 M1 7.5 H9" stroke="#8ea4d8"/></svg><div class="abs" style="left:1344px;top:721px;width:16px;height:17px;background:linear-gradient(#dce6fc,#c2d4f8);border:1px solid #fff;box-shadow:inset 0 0 0 1px #b8ccf0;border-radius:2px"></div><svg class="abs" style="left:0;top:0;overflow:visible" width="1" height="1"><path d="M1348.5 727.5 L1352.0 731.0 L1355.5 727.5" fill="none" stroke="#4d6185" stroke-width="2"/></svg><div class="abs" style="left:440px;top:219px;width:490px;height:414px;background:#f2efe8;border:1px solid #141414;border-radius:7px 7px 0 0;overflow:hidden"><div class="abs" style="left:0;top:0;width:488px;height:22px;background:linear-gradient(#b0bcc8,#98a8b8 30%,#8496a8 60%,#74889a);border-bottom:1px solid #222"></div></div><div class="t" style="left:623.80px;top:224px;font-size:12px;line-height:12px;color:#fff;font-weight:bold;letter-spacing:-0.124px;text-shadow:0 0 1px rgba(60,70,80,.4);">Insertar/editar imagen</div><div class="abs" style="left:895px;top:222px;width:29px;height:16px;background:linear-gradient(#98a6b4,#6c7c8e 50%,#5a6a7c);border:1px solid #2e3a46;border-radius:3px;box-shadow:inset 0 1px 0 rgba(255,255,255,.3)"></div><svg class="abs" style="left:895px;top:222px" width="30" height="17"><path d="M11 4.5 L18.5 11.5 M18.5 4.5 L11 11.5" stroke="#fff" stroke-width="2.6"/></svg><div class="abs" style="left:444px;top:241px;width:482px;height:387px;border:1px solid #d6d2ca;border-top:none;background:#f0f0ee"></div><div class="abs" style="left:453px;top:267px;width:464px;height:322px;background:#fff;border:1px solid #8c9498"></div><div class="abs" style="left:453px;top:250px;width:63px;height:18px;background:#fff;border:1px solid #8c9498;border-bottom:none;border-top:2px solid #4c5a6a;border-radius:3px 3px 0 0"></div><div class="abs" style="left:518px;top:251px;width:77px;height:16px;background:linear-gradient(#fefefe,#ecebe6);border:1px solid #8c9498;border-bottom:none;border-radius:3px 3px 0 0"></div><div class="abs" style="left:597px;top:251px;width:74px;height:16px;background:linear-gradient(#fefefe,#ecebe6);border:1px solid #8c9498;border-bottom:none;border-radius:3px 3px 0 0"></div><div class="t" style="left:463.80px;top:254px;font-size:11px;line-height:11px;color:#111;letter-spacing:0.467px;">General</div><div class="t" style="left:528.20px;top:254px;font-size:11px;line-height:11px;color:#111;letter-spacing:0.367px;">Apariencia</div><div class="t" style="left:607.00px;top:254px;font-size:11px;line-height:11px;color:#111;letter-spacing:0.643px;">Avanzado</div><div class="abs" style="left:464px;top:279px;width:443px;height:89px;border:1px solid #dedede"></div><div class="abs" style="left:469px;top:274px;width:49px;height:10px;background:#fff"></div><div class="t" style="left:472.00px;top:274px;font-size:11px;line-height:11px;color:#2b6aaa;font-weight:bold;letter-spacing:0.233px;">General</div><div class="t" style="left:472.60px;top:297px;font-size:11px;line-height:11px;color:#111;letter-spacing:0.720px;">URL de la imagen</div><div class="t" style="left:472.60px;top:317px;font-size:11px;line-height:11px;color:#111;letter-spacing:0.500px;">Descripción de la</div><div class="t" style="left:472.60px;top:329px;font-size:11px;line-height:11px;color:#111;letter-spacing:0.920px;">imagen</div><div class="t" style="left:472.60px;top:347px;font-size:11px;line-height:11px;color:#111;letter-spacing:0.280px;">Título</div><div class="abs" style="left:612px;top:293px;width:263px;height:18px;border:2px solid #e6c47c;border-radius:1px;background:#fff;box-shadow:0 0 1px #f0d8a0"></div><div class="t" style="left:616.00px;top:297px;font-size:11px;line-height:11px;color:#111;letter-spacing:0.674px;">tblanco.cl/img/cms/catalogoaccesoriospng.png</div><div class="abs" style="left:876px;top:292px;width:22px;height:20px;background:#b4c4ec;border:1px solid #1c3c84"></div><svg class="abs" style="left:876px;top:292px" width="22" height="20"><rect x="4.5" y="3.5" width="13" height="13" fill="#fff" stroke="#4a4a5a"/><rect x="4.5" y="3.5" width="13" height="2.5" fill="#5a6a8a"/><path d="M7 9 H10 M12 9 H15 M7 12 H10 M12 12 H15" stroke="#b02828" stroke-width="1.8"/></svg><div class="abs" style="left:613px;top:320px;width:283px;height:16px;border:1px solid #e6e6e6;background:#fff"></div><div class="abs" style="left:613px;top:344px;width:283px;height:16px;border:1px solid #e6e6e6;background:#fff"></div><div class="abs" style="left:892px;top:322px;width:50px;height:17px;background:#ffffe1;border:1px solid #1a1a1a;box-shadow:2px 2px 2px rgba(0,0,0,.25)"></div><div class="t" style="left:894.70px;top:326px;font-size:11px;line-height:11px;color:#111;letter-spacing:-0.571px;">Examinar</div><div class="abs" style="left:465px;top:374px;width:441px;height:165px;border:1px solid #dedede"></div><div class="abs" style="left:469px;top:369px;width:73px;height:10px;background:#fff"></div><div class="t" style="left:472.00px;top:369px;font-size:11px;line-height:11px;color:#2b6aaa;font-weight:bold;letter-spacing:0.364px;">Vista previa</div><div class="abs" style="left:469px;top:384px;width:430px;height:152px;border:1px solid #000;background:#fff;overflow:hidden"><div class="abs" style="left:78px;top:84px;width:248px;height:66px;box-shadow:0 -4px 30px 4px rgba(0,0,0,.5)"></div><svg class="abs" style="left:78px;top:84px" width="248" height="66" viewBox="0 0 248 66">
<defs><linearGradient id="sky" x1="0" y1="0" x2="0" y2="1"><stop offset="0" stop-color="#6a5a5a"/><stop offset=".25" stop-color="#7a6258"/><stop offset=".45" stop-color="#9c6c4c"/><stop offset=".6" stop-color="#8a6a5a"/><stop offset=".75" stop-color="#5a6070"/><stop offset="1" stop-color="#34485a"/></linearGradient>
<filter id="bl" x="-50%" y="-50%" width="200%" height="200%"><feGaussianBlur stdDeviation="4"/></filter>
<filter id="bl2" x="-50%" y="-50%" width="200%" height="200%"><feGaussianBlur stdDeviation="1.5"/></filter>
<radialGradient id="logo" cx=".5" cy=".35" r=".6"><stop offset="0" stop-color="#f4f4f4"/><stop offset=".6" stop-color="#b4b4b4"/><stop offset="1" stop-color="#707070"/></radialGradient></defs>
<rect width="248" height="66" fill="url(#sky)"/>
<ellipse cx="10" cy="24" rx="50" ry="7" fill="#f0a030" filter="url(#bl)"/>
<ellipse cx="180" cy="12" rx="90" ry="11" fill="#d2be80" filter="url(#bl)"/>
<path d="M110 4 Q150 0 200 3 L248 2 L248 8 Q200 10 150 6 Z" fill="#5a5050" filter="url(#bl2)" opacity=".8"/>
<ellipse cx="195" cy="23" rx="60" ry="3" fill="#eab040" filter="url(#bl2)"/>
<rect x="0" y="29" width="248" height="8" fill="#4a5660" filter="url(#bl2)" opacity=".7"/>
<path d="M0 48 L0 30 L4 26 L7 31 L11 24 L15 30 L19 25 L23 32 L27 28 L30 48 Z" fill="#2a2c1e"/>
<rect x="88" y="34" width="160" height="20" fill="#1e4a66"/>
<ellipse cx="56" cy="46" rx="31" ry="23" fill="url(#logo)" stroke="#3a3a3a" stroke-width="2"/>
<path d="M42 38 Q56 30 70 38" fill="none" stroke="#fff" stroke-width="3" opacity=".8"/>
</svg></div><div class="t" style="left:655.40px;top:505px;font-size:12px;line-height:12px;color:#fff;font-weight:bold;letter-spacing:-0.129px;">Veterinaria BLANCO</div><div class="t" style="left:591.00px;top:391px;font-size:31px;line-height:31px;color:#0c0c0c;font-weight:bold;transform:scaleX(0.9075);transform-origin:0 0;">CATALOGO</div><div class="t" style="left:579.60px;top:431px;font-size:31px;line-height:31px;color:#0c0c0c;font-weight:bold;transform:scaleX(0.8721);transform-origin:0 0;">ACCESORIOS</div><div class="abs" style="left:882px;top:385px;width:16px;height:133px;background:#f6f5ee"></div><div class="abs" style="left:882px;top:385px;width:16px;height:17px;background:linear-gradient(#dce6fc,#c2d4f8);border:1px solid #fff;box-shadow:inset 0 0 0 1px #b8ccf0;border-radius:2px"></div><svg class="abs" style="left:0;top:0;overflow:visible" width="1" height="1"><path d="M886.5 395.5 L890.0 392.0 L893.5 395.5" fill="none" stroke="#4d6185" stroke-width="2"/></svg><div class="abs" style="left:882px;top:402px;width:16px;height:31px;background:linear-gradient(90deg,#b8ccf8,#ccdafc 50%,#b8ccf8);border:1px solid #fff;box-shadow:inset 0 0 0 1px #a8bcec;border-radius:3px"></div><svg class="abs" style="left:886px;top:413px" width="8" height="8"><path d="M0 1.5 H8 M0 3.5 H8 M0 5.5 H8" stroke="#8ea4d8"/></svg><div class="abs" style="left:882px;top:501px;width:16px;height:17px;background:linear-gradient(#dce6fc,#c2d4f8);border:1px solid #fff;box-shadow:inset 0 0 0 1px #b8ccf0;border-radius:2px"></div><svg class="abs" style="left:0;top:0;overflow:visible" width="1" height="1"><path d="M886.5 507.5 L890.0 511.0 L893.5 507.5" fill="none" stroke="#4d6185" stroke-width="2"/></svg><div class="abs" style="left:470px;top:518px;width:412px;height:17px;background:#f6f5ee"></div><div class="abs" style="left:470px;top:518px;width:17px;height:17px;background:linear-gradient(#dce6fc,#c2d4f8);border:1px solid #fff;box-shadow:inset 0 0 0 1px #b8ccf0;border-radius:2px"></div><svg class="abs" style="left:0;top:0;overflow:visible" width="1" height="1"><path d="M480.5 523.0 L477.0 526.5 L480.5 530.0" fill="none" stroke="#4d6185" stroke-width="2"/></svg><div class="abs" style="left:487px;top:518px;width:372px;height:17px;background:linear-gradient(#ccdafc,#bcd0f8);border:1px solid #fff;box-shadow:inset 0 0 0 1px #a8bcec;border-radius:3px"></div><svg class="abs" style="left:669px;top:522px" width="8" height="9"><path d="M1.5 0 V9 M3.5 0 V9 M5.5 0 V9" stroke="#8ea4d8"/></svg><div class="abs" style="left:863px;top:518px;width:17px;height:17px;background:linear-gradient(#dce6fc,#c2d4f8);border:1px solid #fff;box-shadow:inset 0 0 0 1px #b8ccf0;border-radius:2px"></div><svg class="abs" style="left:0;top:0;overflow:visible" width="1" height="1"><path d="M869.5 523.0 L873.0 526.5 L869.5 530.0" fill="none" stroke="#4d6185" stroke-width="2"/></svg><div class="abs" style="left:453px;top:596px;width:94px;height:24px;background:linear-gradient(#fefefe,#f0f0f0 50%,#e4e4e4);border:1px solid #bcbcbc;border-radius:3px"></div><div class="abs" style="left:551px;top:596px;width:94px;height:24px;background:linear-gradient(#fefefe,#f0f0f0 50%,#e4e4e4);border:1px solid #bcbcbc;border-radius:3px"></div><div class="t" style="left:467.80px;top:602px;font-size:12px;line-height:12px;color:#111;font-weight:bold;letter-spacing:0.822px;">Actualizar</div><div class="t" style="left:570.50px;top:602px;font-size:12px;line-height:12px;color:#111;font-weight:bold;letter-spacing:0.771px;">Cancelar</div><div class="abs" style="left:0;top:719px;width:497px;height:19px;background:#e6e6e6;border-top:1px solid #c4c4c4;border-right:1px solid #c4c4c4;border-radius:0 3px 0 0"></div><div class="t" style="left:4.00px;top:725px;font-size:11px;line-height:11px;color:#484848;letter-spacing:-0.124px;">javascript:openBrowser('srcbrowser','src', 'image','theme_advanced_image_image_browser_callback');</div><div class="abs" style="left:0;top:738px;width:1360px;height:30px;background:linear-gradient(#2a58b8 0,#2a58b8 1px,#4490f6 1px,#3a84f0 3px,#2a64e0 5px,#2458dc 40%,#2660dc 85%,#2254c8 95%,#1a44a8)"></div><div class="abs" style="left:0;top:738px;width:101px;height:30px;background:linear-gradient(#6cc46c,#48ac48 12%,#3ea23e 50%,#369a36 80%,#2e882e);border-radius:0 10px 12px 0;box-shadow:inset -3px 0 4px rgba(0,40,0,.3)"></div><svg class="abs" style="left:10px;top:743px" width="22" height="20"><path d="M3 2 Q6 1 10 2.5 L9 9 Q6 7.5 2 8.5 Z" fill="#f0582a"/><path d="M11 2.5 Q14 4 19 2.5 L18 9 Q14 10.5 10 9 Z" fill="#5cc040"/><path d="M2 9.5 Q5 8.5 9 10 L8 16.5 Q5 15 1 16 Z" fill="#3c8cf0"/><path d="M10 10 Q14 11.5 18 10 L17 16.5 Q13 18 9 16.5 Z" fill="#f8c828"/></svg><div class="t" style="left:34.70px;top:746px;font-size:16px;line-height:16px;color:#fff;font-weight:bold;font-style:italic;letter-spacing:0.100px;text-shadow:1px 1px 1px #1a4a1a;">Inicio</div><svg class="abs" style="left:110px;top:743px" width="95" height="22">
<rect x="6.5" y="3.5" width="13" height="14" rx="2" fill="#e8f0ff" stroke="#2a5ac0" stroke-width="1.5"/><path d="M9 11 L15 6 M12 13 L17 9" stroke="#4a6ad0" stroke-width="1.5"/><circle cx="20" cy="8" r="1.5" fill="#e04040"/>
<circle cx="36" cy="11" r="7.5" fill="#e04030"/><path d="M36 11 L36 3.5 A7.5 7.5 0 0 1 42.5 14.7 Z" fill="#f8c820"/><path d="M36 11 L42.5 14.7 A7.5 7.5 0 0 1 29.5 14.7 Z" fill="#30a040"/><circle cx="36" cy="11" r="3.3" fill="#4a8af0" stroke="#fff" stroke-width="1.2"/>
<circle cx="58.5" cy="11" r="7.5" fill="#f07818"/><circle cx="60" cy="10" r="4.5" fill="#2a58b8"/><path d="M52 8 Q55 2 62 4 Q57 5 56 9 Z" fill="#f8a830"/>
<path d="M79.5 3 L82.5 6 L79.5 9 M83.5 3 L86.5 6 L83.5 9" fill="none" stroke="#dfe8ff" stroke-width="1.3"/>
</svg><div class="abs" style="left:204px;top:742px;width:160px;height:23px;background:linear-gradient(#1a44a8,#1e4cb4 50%,#2454c0);border-radius:3px;box-shadow:inset 1px 1px 2px rgba(0,0,30,.5)"></div><div class="abs" style="left:365px;top:742px;width:158px;height:23px;background:linear-gradient(#4a90fa,#3c80f2 50%,#3474e8);border-radius:3px;box-shadow:inset 0 1px 0 rgba(255,255,255,.25)"></div><div class="abs" style="left:525px;top:742px;width:158px;height:23px;background:linear-gradient(#4a90fa,#3c80f2 50%,#3474e8);border-radius:3px;box-shadow:inset 0 1px 0 rgba(255,255,255,.25)"></div><div class="t" style="left:234.50px;top:748px;font-size:12px;line-height:12px;color:#fff;letter-spacing:-0.636px;">PrestaShop™ - Panel ...</div><div class="t" style="left:393.75px;top:748px;font-size:12px;line-height:12px;color:#fff;letter-spacing:-0.663px;">SisGen 5.5&nbsp; Sistema d...</div><div class="t" style="left:553.75px;top:748px;font-size:12px;line-height:12px;color:#fff;letter-spacing:-0.659px;">Problema Prestashop ...</div><svg class="abs" style="left:210px;top:744px" width="480" height="20">
<circle cx="13" cy="10" r="7.5" fill="#e04030"/><path d="M13 10 L13 2.5 A7.5 7.5 0 0 1 19.5 13.7 Z" fill="#f8c820"/><path d="M13 10 L19.5 13.7 A7.5 7.5 0 0 1 6.5 13.7 Z" fill="#30a040"/><circle cx="13" cy="10" r="3.3" fill="#4a8af0" stroke="#fff" stroke-width="1.2"/>
<circle cx="171" cy="10" r="7.5" fill="#58a048"/><circle cx="170" cy="9" r="5.5" fill="#c8d040"/><circle cx="172" cy="11" r="3" fill="#70b0d0"/>
<path d="M326 4 L337 4 L335 17 L328 17 Z" fill="#e8a030"/><path d="M327 1 L329 10 M331 1 L332 10 M335 2 L334 10" stroke="#c03030" stroke-width="1.8"/><path d="M328 10 L335 10" stroke="#30a040" stroke-width="2"/>
</svg><div class="abs" style="left:1267px;top:738px;width:93px;height:30px;background:linear-gradient(#22a8f4 0,#1496ec 10%,#0e8ce4 50%,#0c86de 90%,#0a70c4);border-left:1px solid #0c3a8c;box-shadow:inset 1px 0 0 #4cb8f8"></div><div class="t" style="left:1233.40px;top:748px;font-size:11px;line-height:11px;color:#fff;">ES</div><div class="t" style="left:1319.90px;top:748px;font-size:11px;line-height:11px;color:#fff;letter-spacing:-0.450px;">12:43</div><svg class="abs" style="left:1258px;top:743px" width="60" height="22">
<circle cx="9.5" cy="10.5" r="8.2" fill="#3c94ea" stroke="#a8d0ff" stroke-width="1.2"/><path d="M11.5 6.5 L7.5 10.5 L11.5 14.5" fill="none" stroke="#fff" stroke-width="2.2"/>
<path d="M23 4 L29 2 L35 5 L29 8 Z M23 4 L29 8 L27 13 L22 10 Z M35 5 L29 8 L31 13 L36 10 Z" fill="#d8e4f4" stroke="#90a8c8" stroke-width=".6"/><circle cx="32.5" cy="15" r="3.8" fill="#28a038"/><path d="M30.5 15 L32 16.5 L34.5 13.5" fill="none" stroke="#fff" stroke-width="1.2"/>
<circle cx="46" cy="10.5" r="7" fill="#d8f0f4" stroke="#fff" stroke-width="1.5"/><circle cx="46" cy="10.5" r="4.5" fill="#3a9ab0"/>
</svg></body></html>
